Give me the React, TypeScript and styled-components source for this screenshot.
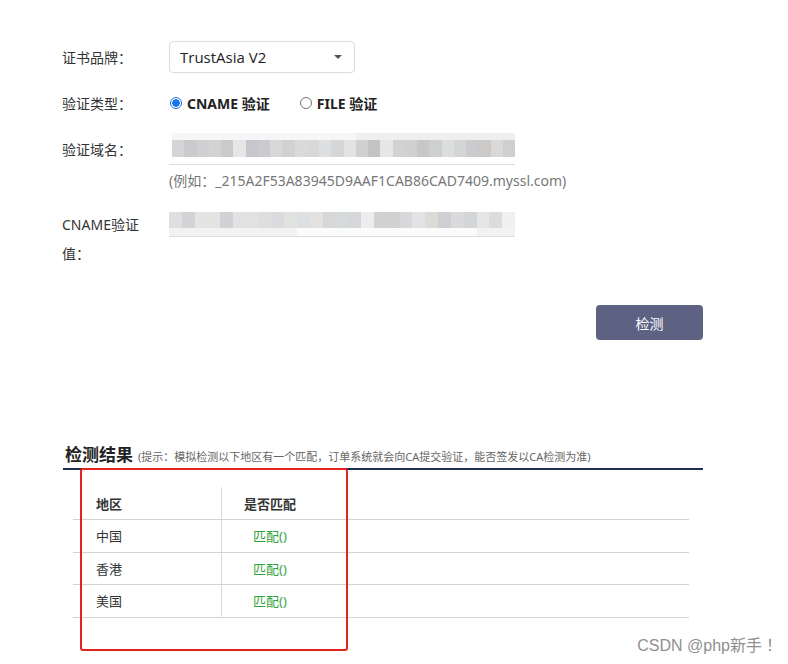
import React from "react";
import styled, { createGlobalStyle } from "styled-components";

const GlobalStyle = createGlobalStyle`
  body {
    margin: 0;
    background: #fff;
    font-family: "Noto Sans", "Noto Sans CJK SC", sans-serif;
    color: #333;
  }
`;

const shadesA = [
  "#d4d5d9", "#cbcbcb", "#cfd0d3", "#d3d3d3", "#cacaca", "#e6e6e6", "#c6c7cc",
  "#cbcbcf", "#d8d8d8", "#d0d1d1", "#dcdad8", "#d7d9d9", "#dde0e3", "#d6d6d6",
  "#e3e3e3", "#d0d0d0", "#c4c4c4", "#e6e6e6", "#d2d2d2", "#cfd0d2", "#c8c6c8",
  "#cdd0cf", "#dcdede", "#d4d6d4", "#cccbcf", "#ccc9c7", "#d9d9d9", "#d0cfcd",
];
const shadesB = [
  "#dedfe0", "#d3d3d6", "#e4e4e2", "#e3e3e1", "#d1d2d6", "#e2e2e2", "#e1e1e1",
  "#dddfdf", "#d9dbde", "#e2e2df", "#dce0e2", "#e4e2de", "#d7d7d9", "#d7dadb",
  "#d5d7da", "#ededed", "#d1d2d2", "#d1d1d1", "#d7d8d9", "#e3e3e5", "#dcdcd7",
  "#cfd0d3", "#dcd9dd", "#d4d5d8", "#e6e6e6", "#dcdcdc", "#f0f0f0",
];

const rows = [
  { area: "中国", ok: "匹配()" },
  { area: "香港", ok: "匹配()" },
  { area: "美国", ok: "匹配()" },
];

const App: React.FC = () => {
  return (
    <Page>
      <GlobalStyle />
      <Form>
        <Row $top={41}>
          <Label>证书品牌：</Label>
          <Select>
            <span>TrustAsia V2</span>
            <Caret />
          </Select>
        </Row>
        <Row $top={20}>
          <Label>验证类型：</Label>
          <Radios>
            <RadioItem>
              <RadioDot $checked />
              CNAME 验证
            </RadioItem>
            <RadioItem>
              <RadioDot />
              FILE 验证
            </RadioItem>
          </Radios>
        </Row>
        <Row $top={20}>
          <Label>验证域名：</Label>
          <Field>
            <Mosaic $cols={shadesA.length}>
              {shadesA.map((c, i) => (
                <Cell key={"t" + i} $shade={i < 15 ? "#f6f6f6" : "#efefef"} $h={7} />
              ))}
              {shadesA.map((c, i) => (
                <Cell key={"b" + i} $shade={c} $h={17} />
              ))}
            </Mosaic>
          </Field>
        </Row>
        <Hint>(例如：_215A2F53A83945D9AAF1CAB86CAD7409.myssl.com)</Hint>
        <Row $top={21} $align="flex-start">
          <TallLabel>CNAME验证值：</TallLabel>
          <Field $compact>
            <Mosaic $cols={shadesB.length}>
              {shadesB.map((c, i) => (
                <Cell key={"t" + i} $shade={c} $h={16} />
              ))}
              {shadesB.map((c, i) => (
                <Cell key={"b" + i} $shade={i > 9 && i < 24 ? "#fbfbfb" : "#f2f2f2"} $h={8} />
              ))}
            </Mosaic>
          </Field>
        </Row>
        <Actions>
          <Button>检测</Button>
        </Actions>
      </Form>

      <Result>
        <TitleBar>
          <Title>检测结果</Title>
          <Tip>(提示：模拟检测以下地区有一个匹配，订单系统就会向CA提交验证，能否签发以CA检测为准)</Tip>
        </TitleBar>
        <Table>
          <HeadCell>地区</HeadCell>
          <HeadCell $center>是否匹配</HeadCell>
          <HeadCell />
          {rows.map((r) => (
            <React.Fragment key={r.area}>
              <BodyCell>{r.area}</BodyCell>
              <BodyCell $center $green>{r.ok}</BodyCell>
              <BodyCell />
            </React.Fragment>
          ))}
        </Table>
        <Marker />
      </Result>
      <Watermark>CSDN @php新手！</Watermark>
    </Page>
  );
};

const Page = styled.div`
  position: relative;
  width: 788px;
  height: 664px;
  overflow: hidden;
`;

const Form = styled.div`
  width: 641px;
  margin-left: 62px;
  display: flex;
  flex-direction: column;
`;

const Row = styled.div<{ $top: number; $align?: string }>`
  display: flex;
  align-items: ${(p) => p.$align || "center"};
  margin-top: ${(p) => p.$top}px;
`;

const Label = styled.div`
  width: 107px;
  flex-shrink: 0;
  font-size: 14px;
  color: #333;
`;

const TallLabel = styled(Label)`
  width: 86px;
  margin-right: 21px;
  line-height: 29px;
  margin-top: -2px;
`;

const Select = styled.div`
  width: 186px;
  height: 32px;
  box-sizing: border-box;
  border: 1px solid #dcdcdc;
  border-radius: 4px;
  display: flex;
  align-items: center;
  justify-content: space-between;
  padding: 0 12px 0 10px;
  font-family: "Open Sans", "Noto Sans", sans-serif;
  font-size: 15px;
  color: #222;
`;

const Caret = styled.span`
  width: 0;
  height: 0;
  border-left: 4px solid transparent;
  border-right: 4px solid transparent;
  border-top: 4px solid #555;
`;

const Radios = styled.div`
  display: flex;
  gap: 30px;
  margin-left: 1px;
`;

const RadioItem = styled.label`
  display: flex;
  align-items: center;
  gap: 5px;
  font-size: 14px;
  font-weight: 700;
  color: #222;
`;

const RadioDot = styled.span<{ $checked?: boolean }>`
  width: 12px;
  height: 12px;
  box-sizing: border-box;
  border-radius: 50%;
  border: 1px solid ${(p) => (p.$checked ? "#1a73e8" : "#767676")};
  background: ${(p) =>
    p.$checked ? "radial-gradient(circle, #1a73e8 0 3.5px, #fff 4px)" : "#fff"};
`;

const Field = styled.div<{ $compact?: boolean }>`
  width: 346px;
  padding-left: ${(p) => (p.$compact ? "0" : "3px")};
  box-sizing: border-box;
  border-bottom: 1px solid #dedede;
  padding-bottom: ${(p) => (p.$compact ? "0" : "7px")};
`;

const Mosaic = styled.div<{ $cols: number }>`
  display: grid;
  grid-template-columns: repeat(${(p) => p.$cols}, 1fr);
`;

const Cell = styled.span<{ $shade: string; $h: number }>`
  height: ${(p) => p.$h}px;
  background: ${(p) => p.$shade};
`;

const Hint = styled.div`
  margin: 6px 0 0 107px;
  font-size: 14px;
  line-height: 20px;
  color: #777;
`;

const Actions = styled.div`
  display: flex;
  justify-content: flex-end;
  margin-top: 37px;
`;

const Button = styled.button`
  width: 107px;
  height: 35px;
  border: none;
  border-radius: 4px;
  background: #5d6182;
  color: #fff;
  font-family: "Noto Sans CJK SC", sans-serif;
  font-size: 14px;
`;

const Result = styled.div`
  position: relative;
  width: 640px;
  margin: 101px 0 0 63px;
`;

const TitleBar = styled.div`
  display: flex;
  align-items: baseline;
  gap: 5px;
  padding: 0 0 2px 2px;
  border-bottom: 2px solid #1e2d4e;
`;

const Title = styled.span`
  font-family: "Noto Sans CJK SC", sans-serif;
  font-size: 17px;
  font-weight: 700;
  color: #222;
`;

const Tip = styled.span`
  font-size: 11px;
  color: #666;
`;

const Table = styled.div`
  display: grid;
  grid-template-columns: 149px 96px 1fr;
  width: 616px;
  margin: 17px 0 0 10px;
`;

const HeadCell = styled.div<{ $center?: boolean }>`
  height: 33px;
  box-sizing: border-box;
  display: flex;
  align-items: center;
  justify-content: ${(p) => (p.$center ? "center" : "flex-start")};
  padding-left: ${(p) => (p.$center ? "0" : "23px")};
  font-size: 13px;
  font-weight: 700;
  color: #333;
  border-bottom: 1px solid #d3d3d3;
  &:nth-child(3n + 1) {
    border-right: 1px solid #dcdcdc;
  }
`;

const BodyCell = styled.div<{ $center?: boolean; $green?: boolean }>`
  height: 32.5px;
  box-sizing: border-box;
  display: flex;
  align-items: center;
  justify-content: ${(p) => (p.$center ? "center" : "flex-start")};
  padding-left: ${(p) => (p.$center ? "0" : "23px")};
  font-size: 13px;
  color: ${(p) => (p.$green ? "#2fa33d" : "#333")};
  border-bottom: 1px solid #d3d3d3;
  &:nth-child(3n + 1) {
    border-right: 1px solid #dcdcdc;
  }
`;

const Marker = styled.div`
  position: absolute;
  left: 17px;
  top: 27px;
  width: 268px;
  height: 183px;
  box-sizing: border-box;
  border: 2px solid #e3241c;
  border-radius: 3px;
`;

const Watermark = styled.div`
  position: absolute;
  right: 10px;
  bottom: 8px;
  font-family: "Liberation Sans", "Noto Sans CJK JP", sans-serif;
  font-size: 16px;
  color: #8f8f8f;
`;

export default App;
